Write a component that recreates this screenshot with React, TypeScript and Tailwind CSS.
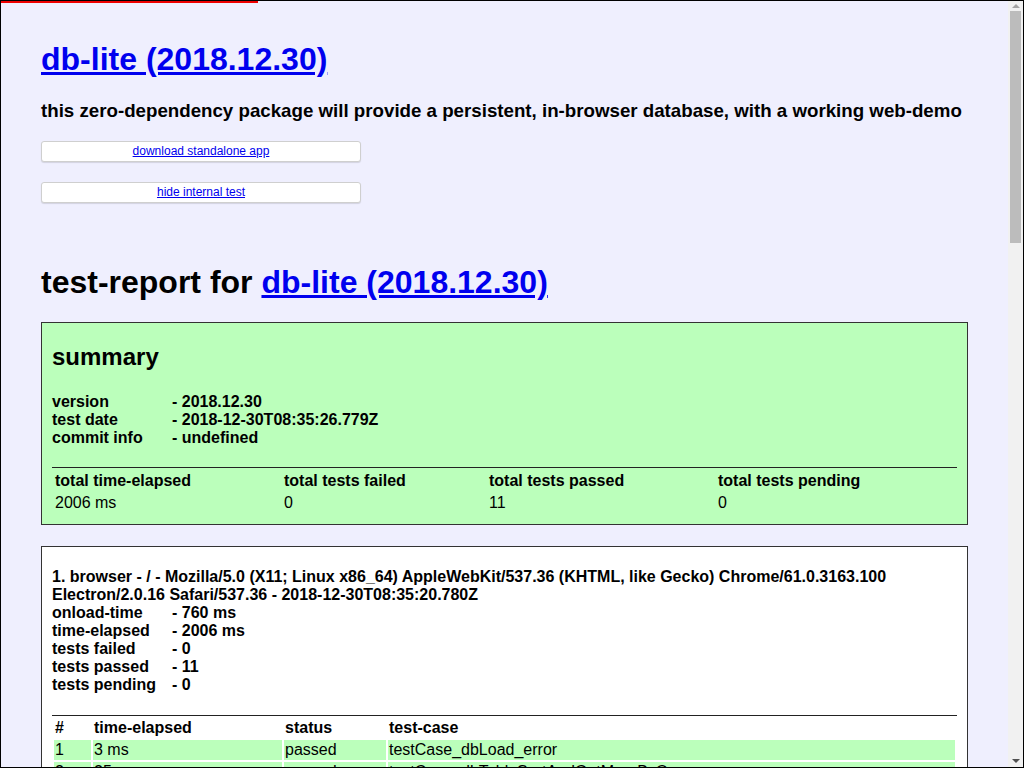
const summaryInfo = [
  ["version", "- 2018.12.30"],
  ["test date", "- 2018-12-30T08:35:26.779Z"],
  ["commit info", "- undefined"],
];

const browserInfo = [
  ["onload-time", "- 760 ms"],
  ["time-elapsed", "- 2006 ms"],
  ["tests failed", "- 0"],
  ["tests passed", "- 11"],
  ["tests pending", "- 0"],
];

const testCases = [
  ["3 ms", "testCase_dbLoad_error"],
  ["25 ms", "testCase_dbTableSortAndGetMoreByOne"],
  ["12 ms", "testCase_dbTableCreateOne_default"],
  ["8 ms", "testCase_dbTableCrudGetManyByQuery_default"],
  ["15 ms", "testCase_dbTableCrudRemoveOneById_default"],
  ["4 ms", "testCase_dbTableCrudSetOneById_default"],
  ["6 ms", "testCase_dbTableDrop_default"],
  ["3 ms", "testCase_dbTableExport_default"],
  ["9 ms", "testCase_dbTableImport_default"],
  ["5 ms", "testCase_dbTableSave_default"],
  ["2 ms", "testCase_buildApp_default"],
];

function InfoList({ rows }: { rows: string[][] }) {
  return (
    <div className="text-[16px] font-bold leading-[18px]">
      {rows.map(([k, v]) => (
        <div key={k} className="flex">
          <span className="w-[120px] shrink-0">{k}</span>
          <span>{v}</span>
        </div>
      ))}
    </div>
  );
}

function Rule() {
  return <div className="border-t border-[#222]" />;
}

function Scrollbar() {
  return (
    <div className="flex w-[15px] shrink-0 flex-col items-center bg-[#f1f1f1]">
      <div className="flex h-[10px] w-full items-center justify-center">
        <div className="h-0 w-0 border-x-[4px] border-b-[4px] border-x-transparent border-b-[#a3a3a3]" />
      </div>
      <div className="h-[232px] w-[11px] bg-[#bcbcbc]" />
      <div className="flex-1" />
      <div className="flex h-[12px] w-full items-center justify-center">
        <div className="h-0 w-0 border-x-[4px] border-t-[4px] border-x-transparent border-t-[#505050]" />
      </div>
    </div>
  );
}

export default function App() {
  return (
    <div
      className="relative flex h-screen overflow-hidden border border-black bg-[#efeffe] text-black"
      style={{ fontFamily: '"Liberation Sans", Arial, sans-serif' }}
    >
      <div className="absolute left-0 top-0 z-10 h-[2px] w-[257px] bg-[#e00]" />
      <div className="min-w-0 flex-1 overflow-hidden px-[40px] pt-[40px] pb-[40px]">
        <h1 className="text-[32px] font-bold leading-[37px]">
          <a href="#" className="text-[#00e] underline">
            db-lite (2018.12.30)
          </a>
        </h1>
        <h3 className="mt-[22px] text-[18.72px] font-bold leading-[22px]">
          this zero-dependency package will provide a persistent, in-browser database, with a working web-demo
        </h3>
        <div className="mt-[19px] flex flex-col gap-[20px]">
          {["download standalone app", "hide internal test"].map((t) => (
            <div
              key={t}
              className="flex h-[21px] w-[320px] items-center justify-center rounded-[3px] border border-[#cfcfcf] bg-white pb-[2px] shadow-[0_1px_1px_rgba(0,0,0,0.12)]"
            >
              <a href="#" className="text-[12px] leading-[14px] text-[#00e] underline">
                {t}
              </a>
            </div>
          ))}
        </div>

        <h1 className="mt-[61px] text-[32px] font-bold leading-[37px]">
          test-report for{" "}
          <a href="#" className="text-[#00e] underline">
            db-lite (2018.12.30)
          </a>
        </h1>

        <div className="mt-[21px] border border-[#333] bg-[#bbffbb] px-[10px] pt-[10px] pb-[9px]">
          <h2 className="mt-[10px] text-[24px] font-bold leading-[28px]">summary</h2>
          <div className="mt-[22px]">
            <InfoList rows={summaryInfo} />
          </div>
          <div className="mt-[20px]">
            <Rule />
          </div>
          <table className="mt-px w-full border-separate border-spacing-[2px] text-[16px] leading-[18px]">
            <thead>
              <tr className="font-bold">
                <td className="w-[227px] p-px">total time-elapsed</td>
                <td className="w-[203px] p-px">total tests failed</td>
                <td className="w-[227px] p-px">total tests passed</td>
                <td className="p-px">total tests pending</td>
              </tr>
            </thead>
            <tbody>
              <tr>
                <td className="p-px">2006 ms</td>
                <td className="p-px">0</td>
                <td className="p-px">11</td>
                <td className="p-px">0</td>
              </tr>
            </tbody>
          </table>
        </div>

        <div className="mt-[21px] border border-[#333] bg-white p-[10px]">
          <div className="mt-[11px] text-[16px] font-bold leading-[18px]">
            1. browser - / - Mozilla/5.0 (X11; Linux x86_64) AppleWebKit/537.36 (KHTML, like Gecko) Chrome/61.0.3163.100 Electron/2.0.16 Safari/537.36 - 2018-12-30T08:35:20.780Z
          </div>
          <InfoList rows={browserInfo} />
          <div className="mt-[21px]">
            <Rule />
          </div>
          <table className="w-full border-separate border-spacing-[2px] text-[16px] leading-[18px]">
            <thead>
              <tr className="font-bold">
                <td className="w-[37px] p-px">#</td>
                <td className="w-[189px] p-px">time-elapsed</td>
                <td className="w-[102px] p-px">status</td>
                <td className="p-px">test-case</td>
              </tr>
            </thead>
            <tbody>
              {testCases.map(([time, name], i) => (
                <tr key={name}>
                  <td className="bg-[#bbffbb] p-px">{i + 1}</td>
                  <td className="bg-[#bbffbb] p-px">{time}</td>
                  <td className="bg-[#bbffbb] p-px">passed</td>
                  <td className="bg-[#bbffbb] p-px">{name}</td>
                </tr>
              ))}
            </tbody>
          </table>
        </div>
      </div>
      <Scrollbar />
    </div>
  );
}
